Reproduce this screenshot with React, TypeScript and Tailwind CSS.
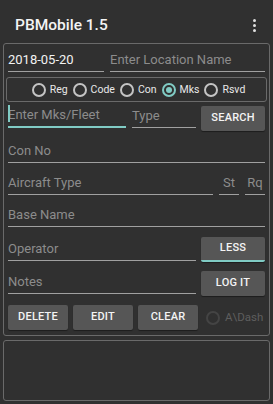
import React from "react";

type FieldProps = {
  label: string;
  value?: boolean;
  className?: string;
  focused?: boolean;
};

function Field({ label, value, className = "", focused }: FieldProps) {
  return (
    <div
      className={`relative flex items-end pb-[3px] ${
        focused ? "border-b-2 border-[#80cbc4]" : "border-b border-[#a0a0a0]"
      } ${className}`}
    >
      {focused && <span className="absolute left-0 bottom-[4px] h-[17px] w-[2px] bg-[#80cbc4]" />}
      <span
        className={`text-[13px] leading-[16px] whitespace-nowrap ${
          value ? "text-[#f2f2f2]" : "text-[#8c8c8c]"
        }`}
      >
        {label}
      </span>
    </div>
  );
}

function Btn({ label, className = "" }: { label: string; className?: string }) {
  return (
    <button
      type="button"
      className={`flex h-[25px] items-center justify-center rounded-[2px] bg-[#565656] text-[11px] font-medium tracking-[0.2px] text-[#f4f4f4] shadow-[0_1px_1px_rgba(0,0,0,0.4)] ${className}`}
    >
      {label}
    </button>
  );
}

function Radio({ label, checked }: { label: string; checked?: boolean }) {
  return (
    <div className="flex items-center gap-[4px]">
      <span
        className={`flex h-[14px] w-[14px] items-center justify-center rounded-full border-2 ${
          checked ? "border-[#80cbc4]" : "border-[#c4c4c4]"
        }`}
      >
        {checked && <span className="h-[6px] w-[6px] rounded-full bg-[#80cbc4]" />}
      </span>
      <span className="text-[10.5px] leading-[14px] text-[#e8e8e8]">{label}</span>
    </div>
  );
}

export default function App() {
  return (
    <div
      className="flex h-[404px] w-[273px] flex-col bg-[#303030]"
      style={{ fontFamily: "Roboto, 'Liberation Sans', sans-serif" }}
    >
      <div className="flex h-[43px] items-center justify-between pl-[15px] pr-[17px] pt-[7px]">
        <span className="text-[15.5px] leading-[18px] font-medium text-[#f4f4f4]">PBMobile 1.5</span>
        <div className="flex flex-col gap-[2px]">
          <span className="h-[3px] w-[3px] rounded-full bg-[#e0e0e0]" />
          <span className="h-[3px] w-[3px] rounded-full bg-[#e0e0e0]" />
          <span className="h-[3px] w-[3px] rounded-full bg-[#e0e0e0]" />
        </div>
      </div>

      <div className="mx-[3px] flex h-[293px] flex-col rounded-[3px] border border-[#6a6a6a] px-[4px]">
        <div className="flex h-[28px] items-end gap-[6px]">
          <Field label="2018-05-20" value className="h-[24px] w-[96px]" />
          <Field label="Enter Location Name" className="h-[24px] flex-1" />
        </div>

        <div className="-mx-[2px] mt-[5px] flex h-[25px] items-center justify-center gap-[5px] rounded-[3px] border border-[#6a6a6a] pl-[4px]">
          <Radio label="Reg" />
          <Radio label="Code" />
          <Radio label="Con" />
          <Radio label="Mks" checked />
          <Radio label="Rsvd" />
        </div>

        <div className="mt-[4px] flex h-[25px] items-end gap-[6px]">
          <Field label="Enter Mks/Fleet" focused className="mb-[3px] h-[22px] w-[118px]" />
          <Field label="Type" className="mb-[3px] h-[22px] w-[64px]" />
          <Btn label="SEARCH" className="ml-[-1px] w-[64px]" />
        </div>

        <div className="flex h-[32px] items-end">
          <Field label="Con No" className="h-[24px] flex-1" />
        </div>

        <div className="flex h-[32px] items-end gap-[6px]">
          <Field label="Aircraft Type" className="h-[24px] flex-1" />
          <Field label="St" className="h-[24px] w-[20px] justify-center" />
          <Field label="Rq" className="h-[24px] w-[20px] justify-center" />
        </div>

        <div className="flex h-[32px] items-end">
          <Field label="Base Name" className="h-[24px] flex-1" />
        </div>

        <div className="flex h-[35px] items-end gap-[5px]">
          <Field label="Operator" className="mb-[1px] h-[24px] w-[188px]" />
          <Btn label="LESS" className="w-[64px] border-b-2 border-[#80cbc4]" />
        </div>

        <div className="flex h-[34px] items-end gap-[5px]">
          <Field label="Notes" className="mb-[2px] h-[24px] w-[188px]" />
          <Btn label="LOG IT" className="w-[64px]" />
        </div>

        <div className="mt-[9px] flex items-center gap-[5px]">
          <Btn label="DELETE" className="w-[60px]" />
          <Btn label="EDIT" className="w-[60px]" />
          <Btn label="CLEAR" className="w-[60px]" />
          <div className="ml-[3px] flex items-center gap-[5px]">
            <span className="h-[14px] w-[14px] rounded-full border-2 border-[#444444]" />
            <span className="text-[11.5px] text-[#5e5e5e]">A\Dash</span>
          </div>
        </div>
      </div>

      <div className="mx-[3px] mt-[4px] h-[61px] rounded-[3px] border border-[#6a6a6a]" />
    </div>
  );
}
